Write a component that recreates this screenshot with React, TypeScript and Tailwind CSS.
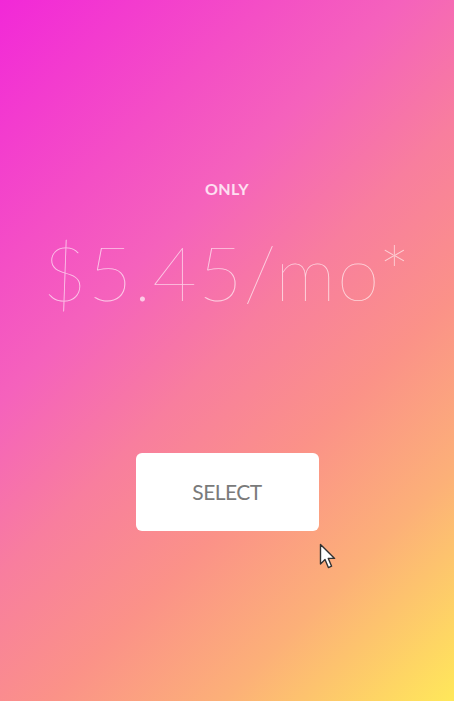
import React from 'react';

const Cursor: React.FC = () => (
  <svg width="20" height="28" viewBox="0 0 20 28" className="absolute left-[319px] top-[543px]">
    <path
      d="M1.5 1.5 L1.5 21 L6 16.6 L9.4 24.6 L12.6 23.2 L9.3 15.4 L15.6 15.4 Z"
      fill="#ffffff"
      stroke="#333333"
      strokeWidth="1.4"
      strokeLinejoin="round"
    />
  </svg>
);

export default function App() {
  return (
    <div
      className="relative w-[454px] h-[701px] overflow-hidden flex flex-col items-center bg-[linear-gradient(135deg,#f228d8_0%,#f562bc_35%,#f87e9e_50%,#fb9288_65%,#fcb078_80%,#ffe85a_100%)]"
      style={{ fontFamily: 'Lato, "Open Sans", sans-serif' }}
    >
      {/* Prix */}
      <div className="pt-[179px] text-[16px] font-bold tracking-wide text-white/80 leading-5">
        ONLY
      </div>
      <div className="mt-[27px] text-[77px] font-thin text-white/65 leading-[90px] tracking-[1px]">
        $5.45/mo*
      </div>

      {/* Bouton */}
      <button className="mt-[137px] w-[183px] h-[78px] bg-white rounded-[6px] text-[21px] text-[#7a7a7a] tracking-tight">
        SELECT
      </button>

      <Cursor />
    </div>
  );
}
